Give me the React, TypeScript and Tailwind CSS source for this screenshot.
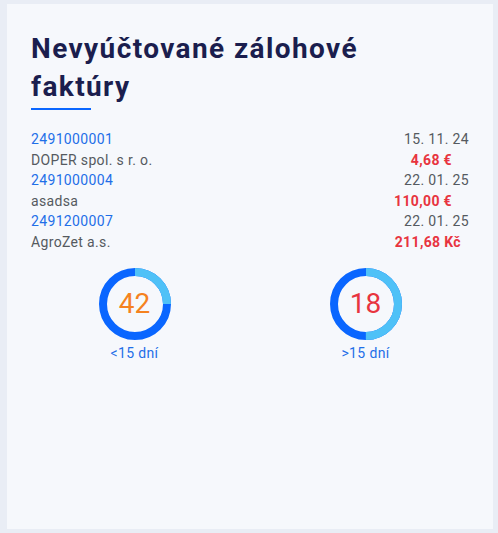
type Invoice = {
  number: string;
  date: string;
  client: string;
  amount: string;
  pad: string;
};

const invoices: Invoice[] = [
  { number: "2491000001", date: "15. 11. 24", client: "DOPER spol. s r. o.", amount: "4,68 €", pad: "pr-[17px]" },
  { number: "2491000004", date: "22. 01. 25", client: "asadsa", amount: "110,00 €", pad: "pr-[17px]" },
  { number: "2491200007", date: "22. 01. 25", client: "AgroZet a.s.", amount: "211,68 Kč", pad: "pr-[8px]" },
];

type DonutProps = {
  value: number;
  share: number;
  label: string;
  valueClass: string;
};

const Donut = ({ value, share, label, valueClass }: DonutProps) => {
  const r = 32;
  const c = 2 * Math.PI * r;
  return (
    <div className="flex flex-col items-center">
      <div className="relative w-[72px] h-[72px]">
        <svg width="72" height="72" viewBox="0 0 72 72" className="-rotate-90">
          <circle cx="36" cy="36" r={r} fill="none" stroke="#0a66ff" strokeWidth="8" />
          <circle
            cx="36"
            cy="36"
            r={r}
            fill="none"
            stroke="#4fc1f7"
            strokeWidth="8"
            strokeDasharray={`${c * share} ${c}`}
          />
        </svg>
        <div className={`absolute inset-0 flex items-center justify-center text-[28px] leading-none ${valueClass}`}>
          {value}
        </div>
      </div>
      <div className="mt-[4px] text-[14px] leading-[18px] tracking-wide text-[#1f6fe8]">{label}</div>
    </div>
  );
};

const App = () => {
  return (
    <div className="min-h-[533px] bg-[#e9edf5] pt-[4px] pb-[4px] pl-[7px] pr-[5px] font-['Roboto',sans-serif]">
      <div className="h-[525px] bg-[#f6f8fc] pt-[26px] px-[24px]">
        <h2 className="text-[28px] leading-[38px] font-bold tracking-wider text-[#1b1e4e]">
          Nevyúčtované zálohové
          <br />
          faktúry
        </h2>
        <div className="mt-[2px] w-[60px] h-[2px] bg-[#0a66ff]" />

        <div className="mt-[19px] text-[14px] leading-[20.6px] tracking-wide">
          {invoices.map((inv) => (
            <div key={inv.number}>
              <div className="flex justify-between">
                <span className="text-[#1f6fe8]">{inv.number}</span>
                <span className="text-[#555a60]">{inv.date}</span>
              </div>
              <div className="flex justify-between">
                <span className="text-[#555a60]">{inv.client}</span>
                <span className={`font-bold text-[#e8343f] ${inv.pad}`}>{inv.amount}</span>
              </div>
            </div>
          ))}
        </div>

        <div className="mt-[15px] grid grid-cols-2 gap-6">
          <Donut value={42} share={0.25} label="<15 dní" valueClass="text-[#f5821f]" />
          <Donut value={18} share={0.5} label=">15 dní" valueClass="text-[#e8343f]" />
        </div>
      </div>
    </div>
  );
};

export default App;
